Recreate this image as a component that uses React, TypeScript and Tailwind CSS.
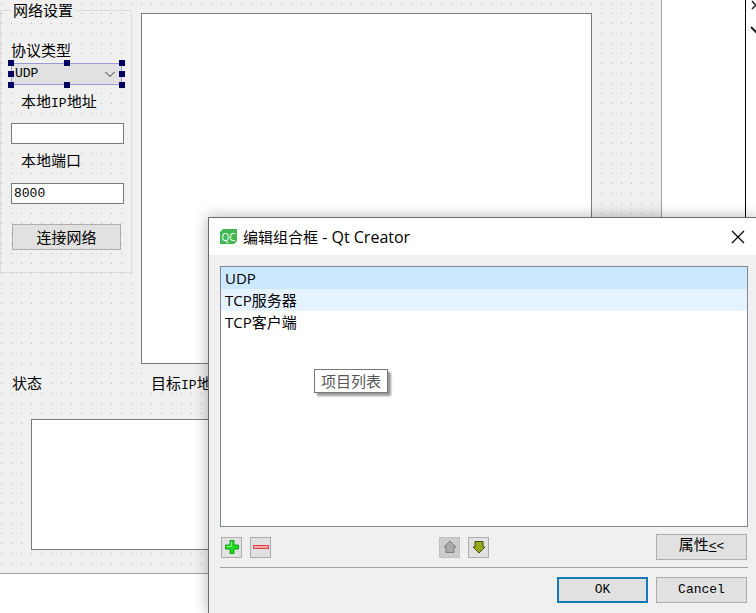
import { useState } from 'react';
import type { ReactNode } from 'react';

const MODES = ['UDP', 'TCP服务器', 'TCP客户端'];

// Latin runs inside the form's fixed-width Chinese text
const Mono = ({ children }: { children: ReactNode }) => (
  <span className="font-['Liberation_Mono',monospace] text-[13px]">{children}</span>
);

const SelectionHandles = () => (
  <div className="pointer-events-none absolute -inset-[3px] grid grid-cols-3 grid-rows-3">
    <i className="size-[6px] self-start justify-self-start bg-[#000060]" />
    <i className="size-[6px] self-start justify-self-center bg-[#000060]" />
    <i className="size-[6px] self-start justify-self-end bg-[#000060]" />
    <i className="size-[6px] self-center justify-self-start bg-[#000060]" />
    <i />
    <i className="size-[6px] self-center justify-self-end bg-[#000060]" />
    <i className="size-[6px] self-end justify-self-start bg-[#000060]" />
    <i className="size-[6px] self-end justify-self-center bg-[#000060]" />
    <i className="size-[6px] self-end justify-self-end bg-[#000060]" />
  </div>
);

const NetworkSettings = () => {
  const [ip, setIp] = useState('');
  const [port, setPort] = useState('8000');

  return (
    <fieldset className="flex h-[273px] w-[132px] shrink-0 flex-col border border-[#dcdcdc] pr-[7px] pl-[10px]">
      <legend className="h-5 bg-[#f0f0f0] px-[2px]">网络设置</legend>

      <label htmlFor="protocol" className="mt-5 h-5 self-start bg-[#f0f0f0]">协议类型</label>
      <div className="relative mt-[3px] w-[111px]">
        <select
          id="protocol"
          defaultValue="UDP"
          className="block h-[22px] w-full appearance-none border border-[#9a9ad0] bg-[#e1e1e1] pl-[3px] font-['Liberation_Mono',monospace] text-[13px]"
        >
          {MODES.map((mode) => (
            <option key={mode}>{mode}</option>
          ))}
        </select>
        <svg className="pointer-events-none absolute top-2 right-[7px] h-[7px] w-[10px]" viewBox="0 0 10 7" fill="none" stroke="#333">
          <path d="M0.5 1 L5 5.5 L9.5 1" />
        </svg>
        <SelectionHandles />
      </div>

      <label htmlFor="local-ip" className="mt-[6px] ml-[10px] h-5 self-start bg-[#f0f0f0]">
        本地<Mono>IP</Mono>地址
      </label>
      <input
        id="local-ip"
        value={ip}
        onChange={(e) => setIp(e.target.value)}
        className="mt-3 h-[21px] w-full shrink-0 border border-[#7a7a7a] bg-white px-[2px] font-['Liberation_Mono',monospace] text-[13px]"
      />

      <label htmlFor="local-port" className="mt-[6px] ml-[10px] h-5 self-start bg-[#f0f0f0]">本地端口</label>
      <input
        id="local-port"
        value={port}
        onChange={(e) => setPort(e.target.value)}
        className="mt-[13px] h-[21px] w-full shrink-0 border border-[#7a7a7a] bg-white px-[2px] font-['Liberation_Mono',monospace] text-[13px]"
      />

      <button className="mt-5 mr-[3px] ml-px h-[26px] shrink-0 border border-[#adadad] bg-[#e1e1e1]">连接网络</button>
    </fieldset>
  );
};

// 10px snap grid: grey columns masked down to single dots by the form colour
const FormCanvas = () => (
  <main className="h-[574px] min-w-0 flex-1 border-r border-b border-[#a0a0a0] bg-[#f0f0f0] bg-[linear-gradient(#f0f0f0_9px,transparent_9px),linear-gradient(90deg,#b4b4b4_1px,transparent_1px)] bg-[length:10px_10px] bg-[position:0_4px,1px_0]">
    <div className="flex h-[373px]">
      <NetworkSettings />
      <textarea aria-label="接收" className="mt-[13px] mr-[69px] ml-[9px] h-[351px] min-w-0 flex-1 resize-none border border-[#7a7a7a] bg-white" />
    </div>
    <div className="flex h-5 pl-3">
      <span className="w-[139px]">
        <span className="bg-[#f0f0f0]">状态</span>
      </span>
      <span className="bg-[#f0f0f0]">
        目标<Mono>IP</Mono>地址
      </span>
    </div>
    <textarea aria-label="状态" className="mt-[26px] ml-[31px] block h-[131px] w-4/5 resize-none border border-[#7a7a7a] bg-white" />
  </main>
);

const QtCreatorLogo = () => (
  <svg className="h-[15px] w-[17px]" viewBox="0 0 17 15">
    <path d="M3 0 H17 V12 L14 15 H0 V3 Z" fill="#41b754" />
    <text x="8.5" y="11.5" textAnchor="middle" fill="#fff" fontSize="10" fontFamily="Open Sans, sans-serif">QC</text>
  </svg>
);

const PlusIcon = () => (
  <svg className="size-4" viewBox="0 0 16 16">
    <path d="M6 1.5 H10 V6 H14.5 V10 H10 V14.5 H6 V10 H1.5 V6 H6 Z" fill="#20dc20" stroke="#0fa315" />
    <path d="M7.5 2.5 V7.5 H2.5" fill="none" stroke="#8dfb8d" />
  </svg>
);

const MinusIcon = () => (
  <svg className="size-4" viewBox="0 0 16 16">
    <rect x="0.5" y="6.5" width="15" height="3" fill="#f7a6a8" stroke="#d9444c" />
  </svg>
);

const UpIcon = () => (
  <svg className="size-4" viewBox="0 0 16 16">
    <path d="M8 2 L14 8 H12 V13.5 H4 V8 H2 Z" fill="#a9a9a9" stroke="#7d7d7d" strokeLinejoin="round" />
  </svg>
);

const DownIcon = () => (
  <svg className="size-4" viewBox="0 0 16 16">
    <path d="M4 2.5 H12 V8 H14 L8 14 L2 8 H4 Z" fill="#93a81c" stroke="#454d12" strokeLinejoin="round" />
  </svg>
);

const EditComboDialog = () => {
  const [current, setCurrent] = useState(0);

  return (
    <section
      role="dialog"
      aria-labelledby="dialog-title"
      className="absolute top-[217px] right-0 bottom-0 left-[208px] border-t border-l border-[#6a6a6a] bg-[#f0f0f0] font-['Open_Sans','Noto_Sans_CJK_SC',sans-serif] shadow-[0_0_14px_rgba(0,0,0,0.3)]"
    >
      <header className="flex h-[37px] items-center bg-white px-[11px]">
        <QtCreatorLogo />
        <h1 id="dialog-title" className="ml-[6px] flex-1">
          编辑组合框<span className="text-[16px]"> - Qt Creator</span>
        </h1>
        <button aria-label="关闭">
          <svg className="size-[14px]" viewBox="0 0 14 14" stroke="#000" strokeWidth="1.2">
            <path d="M1 1 L13 13 M13 1 L1 13" />
          </svg>
        </button>
      </header>

      <div className="pt-[11px] pr-2 pl-[11px]">
        <ul className="h-[261px] border border-[#828790] bg-white">
          {MODES.map((mode, i) => (
            <li key={mode}>
              <button
                onClick={() => setCurrent(i)}
                className={`block h-[22px] w-full pl-1 text-left ${
                  i === current ? 'bg-[#cce8ff]' : i === 1 ? 'bg-[#e5f3ff]' : 'bg-white'
                }`}
              >
                {mode}
              </button>
            </li>
          ))}
        </ul>

        <div className="flex items-center gap-2 px-px pt-[7px] font-['Liberation_Mono','Noto_Sans_CJK_SC',monospace]">
          <button aria-label="新建" className="flex size-[21px] items-center justify-center border border-[#adadad] bg-[#e1e1e1]">
            <PlusIcon />
          </button>
          <button aria-label="删除" className="flex size-[21px] items-center justify-center border border-[#adadad] bg-[#e1e1e1]">
            <MinusIcon />
          </button>
          <span className="flex-1" />
          <button aria-label="上移" disabled className="flex size-[21px] items-center justify-center border border-[#bfbfbf] bg-[#cccccc]">
            <UpIcon />
          </button>
          <button aria-label="下移" className="mr-[159px] flex size-[21px] items-center justify-center border border-[#adadad] bg-[#e1e1e1]">
            <DownIcon />
          </button>
          <button className="flex h-[26px] w-[91px] items-center justify-center border border-[#adadad] bg-[#e1e1e1]">
            属性<Mono><u>&lt;</u>&lt;</Mono>
          </button>
        </div>

        <hr className="mt-[7px] border-[#a0a0a0]" />

        <footer className="flex justify-end gap-2 px-px pt-[9px] font-['Liberation_Mono',monospace] text-[13px]">
          <button className="h-[26px] w-[91px] border-2 border-[#1579b5] bg-[#e1e1e1]">OK</button>
          <button className="h-[26px] w-[91px] border border-[#adadad] bg-[#e1e1e1]">Cancel</button>
        </footer>
      </div>

      {/* Tooltip over the list */}
      <div
        role="tooltip"
        className="absolute top-[151px] left-[105px] flex h-6 w-[74px] items-center justify-center border border-[#767676] bg-white text-[#575757] shadow-[3px_3px_2px_rgba(0,0,0,0.4)]"
      >
        项目列表
      </div>
    </section>
  );
};

export default function App() {
  return (
    <div className="relative flex min-h-screen items-stretch overflow-hidden bg-white font-['Noto_Sans_CJK_SC',sans-serif] text-[15px] leading-5 text-black">
      <FormCanvas />
      <aside className="flex w-[94px] shrink-0 justify-end">
        <div className="w-[11px] overflow-hidden border-l border-black">
          <svg className="h-10 w-[10px]" viewBox="0 0 10 40" fill="none" stroke="#222" strokeWidth="1.5">
            <path d="M6 1 L12 8 M6 9 L12 3" />
            <path d="M5 27 L12 34" strokeWidth="2" />
          </svg>
        </div>
      </aside>
      <EditComboDialog />
    </div>
  );
}
